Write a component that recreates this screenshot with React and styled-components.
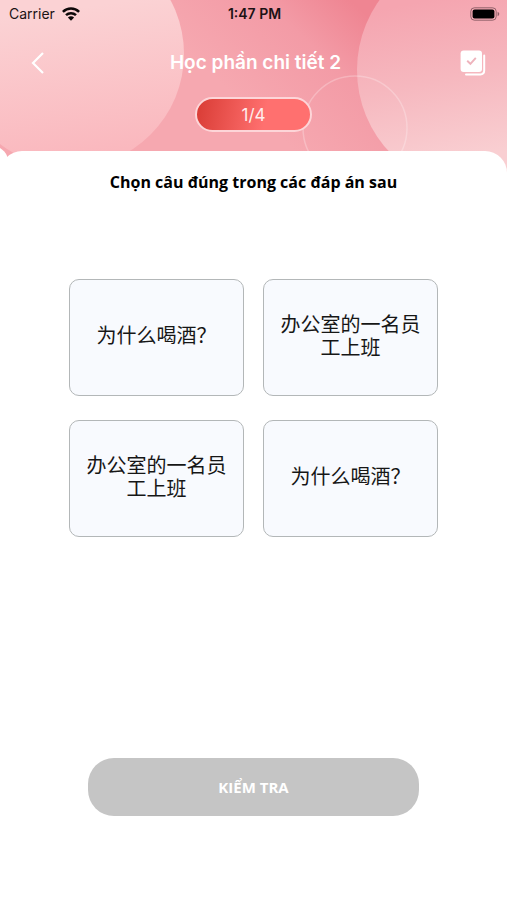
import React, { useState } from "react";
import styled, { createGlobalStyle } from "styled-components";

const GlobalStyle = createGlobalStyle`
  *, *::before, *::after { box-sizing: border-box; }
  body { margin: 0; background: #fff; }
  button { font: inherit; cursor: pointer; }
`;

const Screen = styled.div`
  position: relative;
  min-height: 100vh;
  display: flex;
  flex-direction: column;
  background: #fff;
  font-family: Inter, "Noto Sans CJK SC", sans-serif;
`;

const Backdrop = styled.svg`
  position: absolute;
  top: 0;
  left: 0;
  width: 100%;
  height: 190px;
`;

const Header = styled.header`
  position: relative;
  height: 151px;
  display: flex;
  flex-direction: column;
  align-items: center;
`;

const StatusBar = styled.div`
  width: 100%;
  height: 28px;
  padding: 0 7px 0 9px;
  display: grid;
  grid-template-columns: 1fr auto 1fr;
  align-items: center;
  font-size: 14px;
  line-height: 16px;
  color: #1c1214;
`;

const Carrier = styled.span`
  display: flex;
  align-items: center;
  gap: 7px;
`;

const Clock = styled.span`
  font-weight: 600;
`;

const Battery = styled.svg`
  justify-self: end;
`;

const NavBar = styled.nav`
  width: 100%;
  height: 69px;
  padding: 0 14px 0 18px;
  display: grid;
  grid-template-columns: 40px 1fr 40px;
  align-items: center;
`;

const IconButton = styled.button`
  width: 40px;
  height: 40px;
  padding: 0;
  display: grid;
  place-items: center;
  border: 0;
  background: none;
`;

const Title = styled.h1`
  margin: 0;
  text-align: center;
  font-size: 19px;
  line-height: 24px;
  font-weight: 600;
  color: #fff;
`;

const Counter = styled.div`
  width: 117px;
  height: 35px;
  display: grid;
  place-items: center;
  border: 2px solid #fdd5d8;
  border-radius: 18px;
  background: linear-gradient(100deg, #d93c35 0%, #ff706f 60%);
  color: #ffeded;
  font-size: 17px;
  line-height: 20px;
`;

const Sheet = styled.main`
  position: relative;
  flex: 1;
  display: flex;
  flex-direction: column;
  border-radius: 22px 22px 0 0;
  background: #fff;
`;

const Prompt = styled.h2`
  margin: 0;
  padding: 20px 20px 0;
  text-align: center;
  font-family: "Open Sans", sans-serif;
  font-size: 16px;
  line-height: 22px;
  font-weight: 700;
  color: #000;
`;

const Options = styled.div`
  margin: 86px 69px 40px;
  display: grid;
  grid-template-columns: 1fr 1fr;
  grid-auto-rows: minmax(117px, auto);
  gap: 24px 19px;
`;

const Option = styled.button`
  padding: 0 16px 6px;
  border: 1px solid ${(p) => (p.$selected ? "#ff706f" : "#b3b7b8")};
  border-radius: 10px;
  background: #f8fafe;
  color: #161616;
  && {
    font-family: "Noto Sans CJK SC", sans-serif;
    font-size: 20px;
    line-height: 23px;
  }
`;

const CheckButton = styled.button`
  margin: auto 88px 84px;
  height: 58px;
  padding: 0 16px;
  border: 0;
  border-radius: 26px;
  background: #c5c5c5;
  color: #fff;
  && {
    font-family: "Open Sans", sans-serif;
    font-size: 15px;
    font-weight: 700;
  }
`;

const options = [
  "为什么喝酒？",
  "办公室的一名员工上班",
  "办公室的一名员工上班",
  "为什么喝酒？",
];

function HeaderArt() {
  return (
    <Backdrop viewBox="0 0 507 190" preserveAspectRatio="xMidYMin slice" aria-hidden="true">
      <defs>
        <linearGradient id="base" gradientUnits="userSpaceOnUse" x1="350" y1="0" x2="250" y2="110">
          <stop offset="0" stopColor="#ef8592" />
          <stop offset="0.4" stopColor="#f39ba6" />
          <stop offset="1" stopColor="#f6a8b0" />
        </linearGradient>
        <linearGradient id="left" gradientUnits="userSpaceOnUse" x1="60" y1="10" x2="80" y2="155">
          <stop offset="0" stopColor="#fbd2d4" />
          <stop offset="1" stopColor="#fab8be" />
        </linearGradient>
        <linearGradient id="right" gradientUnits="userSpaceOnUse" x1="430" y1="0" x2="460" y2="160">
          <stop offset="0" stopColor="#f5a5b0" />
          <stop offset="0.5" stopColor="#f6b8bf" />
          <stop offset="1" stopColor="#f9cfd2" />
        </linearGradient>
      </defs>
      <rect width="507" height="190" fill="url(#base)" />
      <circle cx="70" cy="54" r="114" fill="url(#left)" />
      <circle cx="477" cy="70" r="120" fill="url(#right)" />
      <circle cx="355" cy="128" r="52" fill="none" stroke="#fff" strokeOpacity="0.25" strokeWidth="1.5" />
      <path d="M0 148Q5 151 7 156V190H0Z" fill="#fff" />
    </Backdrop>
  );
}

function WifiIcon() {
  return (
    <svg width="18" height="14" viewBox="0 0 18 14" fill="none" stroke="#0d0809" strokeWidth="2.5" aria-hidden="true">
      <path d="M0.9 4.9C5.4 0.5 12.6 0.5 17.1 4.9" />
      <path d="M4 8.2C6.8 5.5 11.2 5.5 14 8.2" />
      <path d="M9 13.8L5.9 10.6C7.6 8.9 10.4 8.9 12.1 10.6Z" fill="#0d0809" stroke="none" />
    </svg>
  );
}

function BatteryIcon() {
  return (
    <Battery width="30" height="14" viewBox="0 0 30 14" aria-hidden="true">
      <rect x="0.8" y="0.8" width="25.4" height="12.4" rx="3.6" fill="none" stroke="#704b51" strokeOpacity="0.75" />
      <rect x="2.6" y="2.6" width="21.8" height="8.8" rx="2" fill="#000" />
      <path d="M27.6 4.8C29.8 5.6 29.8 8.4 27.6 9.2Z" fill="#8c5f66" />
    </Battery>
  );
}

export default function App() {
  const [selected, setSelected] = useState(null);
  return (
    <Screen lang="vi">
      <GlobalStyle />
      <HeaderArt />
      <Header>
        <StatusBar>
          <Carrier>
            Carrier
            <WifiIcon />
          </Carrier>
          <Clock>1:47 PM</Clock>
          <BatteryIcon />
        </StatusBar>
        <NavBar>
          <IconButton type="button" aria-label="Quay lại">
            <svg width="14" height="24" viewBox="0 0 14 24" fill="none" stroke="#fff" strokeWidth="2.2" aria-hidden="true">
              <path d="M12 2L2 12L12 22" />
            </svg>
          </IconButton>
          <Title>Học phần chi tiết 2</Title>
          <IconButton type="button" aria-label="Danh sách">
            <svg width="26" height="26" viewBox="0 0 26 26" aria-hidden="true">
              <path d="M24.2 5.4V20.6Q24.2 24.4 20.4 24.4H6" fill="none" stroke="#fff" strokeWidth="2" strokeLinecap="round" />
              <rect x="0.6" y="0.6" width="21.4" height="21.4" rx="3" fill="#fff" />
              <path d="M7.2 10.8L10.4 13.8L15.8 7.8" fill="none" stroke="#eeb3bc" strokeWidth="1.9" />
            </svg>
          </IconButton>
        </NavBar>
        <Counter>1/4</Counter>
      </Header>
      <Sheet>
        <Prompt>Chọn câu đúng trong các đáp án sau</Prompt>
        <Options>
          {options.map((text, i) => (
            <Option
              key={i}
              type="button"
              lang="zh-CN"
              $selected={selected === i}
              aria-pressed={selected === i}
              onClick={() => setSelected(i)}
            >
              {text}
            </Option>
          ))}
        </Options>
        <CheckButton type="button">KIỂM TRA</CheckButton>
      </Sheet>
    </Screen>
  );
}
